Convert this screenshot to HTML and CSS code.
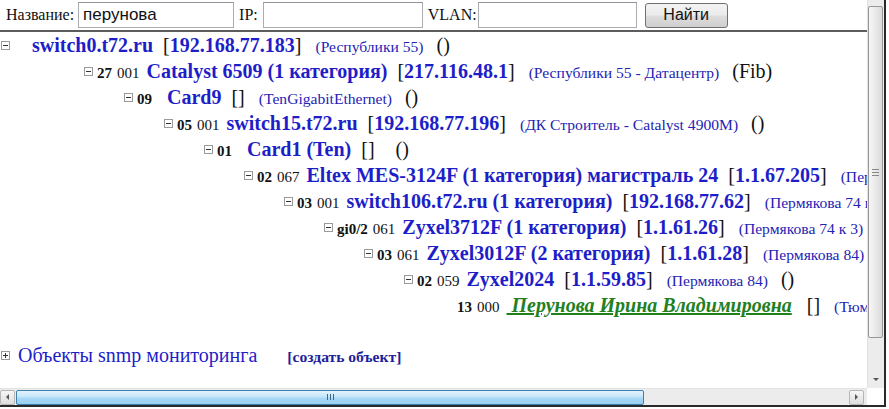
FILE: index.html
```html
<!DOCTYPE html>
<html lang="ru">
<head>
<meta charset="utf-8">
<title>Поиск</title>
<link rel="stylesheet" href="styles.css">
</head>
<body>
<div class="window">
  <div class="viewport">
    <form class="search">
      <label class="lbl">Название:</label><input class="field f-name" value="перунова">
      <label class="lbl lbl-gap">IP:</label><input class="field f-ip" value="">
      <label class="lbl lbl-gap lbl-vlan">VLAN:</label><input class="field f-vlan" value="">
      <button type="button" class="btn">Найти</button>
    </form>
    <div class="tree">
      <div class="row l0"><svg class="tg" width="9" height="9" viewBox="0 0 9 9"><rect x="0.5" y="0.5" width="8" height="8" fill="#fff" stroke="#9a9a9a"/><path d="M2 4.5h5" stroke="#333"/></svg><b class="nm first">switch0.t72.ru</b><span class="ipw">[<b class="ip">192.168.77.183</b>]</span><span class="loc">(Республики 55)</span><span class="par">()</span></div>
      <div class="row l1"><svg class="tg" width="9" height="9" viewBox="0 0 9 9"><rect x="0.5" y="0.5" width="8" height="8" fill="#fff" stroke="#9a9a9a"/><path d="M2 4.5h5" stroke="#333"/></svg><b class="num">27</b><span class="code">001</span><b class="nm">Catalyst 6509 (1 категория)</b><span class="ipw">[<b class="ip">217.116.48.1</b>]</span><span class="loc">(Республики 55 - Датацентр)</span><span class="par">(Fib)</span></div>
      <div class="row l2"><svg class="tg" width="9" height="9" viewBox="0 0 9 9"><rect x="0.5" y="0.5" width="8" height="8" fill="#fff" stroke="#9a9a9a"/><path d="M2 4.5h5" stroke="#333"/></svg><b class="num">09</b><b class="nm wide">Card9</b><span class="ipw">[]</span><span class="loc">(TenGigabitEthernet)</span><span class="par">()</span></div>
      <div class="row l3"><svg class="tg" width="9" height="9" viewBox="0 0 9 9"><rect x="0.5" y="0.5" width="8" height="8" fill="#fff" stroke="#9a9a9a"/><path d="M2 4.5h5" stroke="#333"/></svg><b class="num">05</b><span class="code">001</span><b class="nm">switch15.t72.ru</b><span class="ipw">[<b class="ip">192.168.77.196</b>]</span><span class="loc">(ДК Строитель - Catalyst 4900M)</span><span class="par">()</span></div>
      <div class="row l4"><svg class="tg" width="9" height="9" viewBox="0 0 9 9"><rect x="0.5" y="0.5" width="8" height="8" fill="#fff" stroke="#9a9a9a"/><path d="M2 4.5h5" stroke="#333"/></svg><b class="num">01</b><b class="nm wide">Card1 (Ten)</b><span class="ipw">[]</span><span class="par far">()</span></div>
      <div class="row l5"><svg class="tg" width="9" height="9" viewBox="0 0 9 9"><rect x="0.5" y="0.5" width="8" height="8" fill="#fff" stroke="#9a9a9a"/><path d="M2 4.5h5" stroke="#333"/></svg><b class="num">02</b><span class="code">067</span><b class="nm">Eltex MES-3124F (1 категория) магистраль 24</b><span class="ipw">[<b class="ip">1.1.67.205</b>]</span><span class="loc">(Пермякова 74)</span></div>
      <div class="row l6"><svg class="tg" width="9" height="9" viewBox="0 0 9 9"><rect x="0.5" y="0.5" width="8" height="8" fill="#fff" stroke="#9a9a9a"/><path d="M2 4.5h5" stroke="#333"/></svg><b class="num">03</b><span class="code">001</span><b class="nm">switch106.t72.ru (1 категория)</b><span class="ipw">[<b class="ip">192.168.77.62</b>]</span><span class="loc">(Пермякова 74 к 3)</span></div>
      <div class="row l7"><svg class="tg" width="9" height="9" viewBox="0 0 9 9"><rect x="0.5" y="0.5" width="8" height="8" fill="#fff" stroke="#9a9a9a"/><path d="M2 4.5h5" stroke="#333"/></svg><b class="num">gi0/2</b><span class="code">061</span><b class="nm">Zyxel3712F (1 категория)</b><span class="ipw">[<b class="ip">1.1.61.26</b>]</span><span class="loc">(Пермякова 74 к 3)</span></div>
      <div class="row l8"><svg class="tg" width="9" height="9" viewBox="0 0 9 9"><rect x="0.5" y="0.5" width="8" height="8" fill="#fff" stroke="#9a9a9a"/><path d="M2 4.5h5" stroke="#333"/></svg><b class="num">03</b><span class="code">061</span><b class="nm">Zyxel3012F (2 категория)</b><span class="ipw">[<b class="ip">1.1.61.28</b>]</span><span class="loc">(Пермякова 84)</span></div>
      <div class="row l9"><svg class="tg" width="9" height="9" viewBox="0 0 9 9"><rect x="0.5" y="0.5" width="8" height="8" fill="#fff" stroke="#9a9a9a"/><path d="M2 4.5h5" stroke="#333"/></svg><b class="num">02</b><span class="code">059</span><b class="nm">Zyxel2024</b><span class="ipw">[<b class="ip">1.1.59.85</b>]</span><span class="loc">(Пермякова 84)</span><span class="par">()</span></div>
      <div class="row l10"><span class="tg-blank"></span><b class="num">13</b><span class="code">000</span><a class="person">&nbsp;Перунова Ирина Владимировна</a><span class="ipw ipw-p">[]</span><span class="loc">(Тюмень)</span></div>
    </div>
    <div class="snmp"><svg class="tg" width="9" height="9" viewBox="0 0 9 9"><rect x="0.5" y="0.5" width="8" height="8" fill="#fff" stroke="#9a9a9a"/><path d="M2 4.5h5M4.5 2v5" stroke="#333"/></svg><span class="snmp-title">Объекты snmp мониторинга</span><b class="create">[создать объект]</b></div>
  </div>
  <div class="vscroll">
    <div class="vthumb"><span class="vgrip"></span></div>
    <div class="vbtn"><span class="arr-down"></span></div>
  </div>
  <div class="hscroll">
    <div class="hbtn"><span class="arr-left"></span></div>
    <div class="hthumb"><span class="hgrip"></span></div>
    <div class="hbtn hbtn-r"><span class="arr-right"></span></div>
  </div>
  <div class="corner"></div>
</div>
</body>
</html>
```

FILE: styles.css
```css
html, body {
  margin: 0;
  padding: 0;
  background: #fff;
}
body {
  width: 889px;
  height: 409px;
  overflow: hidden;
  font-family: "Liberation Serif", "Times New Roman", serif;
  color: #111;
}
.window {
  display: grid;
  grid-template-columns: 867px 17px;
  grid-template-rows: 388px 17px;
  width: 884px;
  border-right: 2px solid #2a2a2a;
  border-bottom: 2px solid #2a2a2a;
}
.viewport {
  overflow: hidden;
  background: #fff;
}
.search {
  display: flex;
  align-items: center;
  height: 32px;
  padding-left: 6px;
  border-bottom: 2px solid #5c5c5c;
  margin: 0;
  box-sizing: border-box;
}
.lbl {
  font-size: 16px;
  color: #111;
  margin-right: 4px;
}
.lbl-gap {
  margin-left: 5px;
}
.lbl-vlan {
  margin-right: 1px;
}
.field {
  box-sizing: border-box;
  height: 26px;
  border: 1px solid #abadb3;
  border-top-color: #8e9299;
  padding: 0 4px;
  font-family: "Liberation Sans", Arial, sans-serif;
  font-size: 17px;
  color: #111;
  margin: 0;
  outline: none;
}
.f-name { width: 156px; }
.f-ip { width: 160px; margin-left: 1px; }
.f-vlan { width: 159px; }
.btn {
  margin-left: 8px;
  width: 83px;
  height: 25px;
  border: 1px solid #707070;
  border-radius: 3px;
  background: linear-gradient(#f3f3f3 0%, #ebebeb 48%, #dddddd 52%, #cfcfcf 100%);
  font-family: "Liberation Sans", Arial, sans-serif;
  font-size: 16px;
  color: #111;
  padding: 0;
}
.row {
  height: 26px;
  line-height: 26px;
  white-space: nowrap;
  font-family: "Liberation Serif", "Times New Roman", serif;
}
.l0 { padding-left: 1px; }
.l1 { padding-left: 84px; }
.l2 { padding-left: 124px; }
.l3 { padding-left: 164px; }
.l4 { padding-left: 204px; }
.l5 { padding-left: 244px; }
.l6 { padding-left: 284px; }
.l7 { padding-left: 324px; }
.l8 { padding-left: 364px; }
.l9 { padding-left: 404px; }
.l10 { padding-left: 444px; }
.tg {
  vertical-align: 2px;
}
.tg-blank {
  display: inline-block;
  width: 9px;
}
.num {
  font-size: 15px;
  margin-left: 4px;
  color: #111;
}
.code {
  font-size: 15px;
  margin-left: 5px;
  color: #111;
}
.nm {
  font-size: 20px;
  color: #1e1ec8;
  margin-left: 7px;
}
.nm.first {
  margin-left: 22px;
}
.nm.wide {
  margin-left: 15px;
}
.ipw {
  font-size: 20px;
  color: #111;
  margin-left: 10px;
}
.ipw-p {
  margin-left: 15px;
}
.ip {
  color: #1e1ec8;
}
.loc {
  font-size: 15.6px;
  color: #2424b4;
  margin-left: 14px;
}
.par {
  font-size: 20px;
  color: #111;
  margin-left: 13px;
}
.par.far {
  margin-left: 21px;
}
.person {
  font-size: 20px;
  font-weight: bold;
  font-style: italic;
  color: #23801f;
  text-decoration: underline;
  margin-left: 7px;
}
.snmp {
  height: 26px;
  line-height: 26px;
  margin-top: 24px;
  white-space: nowrap;
  padding-left: 1px;
}
.snmp-title {
  font-size: 20px;
  color: #1e1ec8;
  margin-left: 8px;
}
.create {
  font-size: 15.6px;
  color: #1e1e9a;
  margin-left: 30px;
}
/* vertical scrollbar */
.vscroll {
  background: #ececec;
  border-left: 1px solid #e2e2e2;
  display: flex;
  flex-direction: column;
  justify-content: space-between;
  padding-top: 6px;
  box-sizing: border-box;
}
.vthumb {
  box-sizing: border-box;
  width: 15px;
  height: 332px;
  border: 1px solid #979797;
  border-radius: 2px;
  background: linear-gradient(to right, #f7f7f7, #e9e9e9 50%, #dadada);
  display: flex;
  align-items: center;
  justify-content: center;
}
.vgrip {
  display: block;
  width: 7px;
  height: 5px;
  border-top: 1px solid #888;
  border-bottom: 1px solid #888;
  background: linear-gradient(transparent 2px, #888 2px, #888 3px, transparent 3px);
}
.vbtn {
  height: 17px;
  display: flex;
  align-items: center;
  justify-content: center;
}
.arr-down {
  width: 0;
  height: 0;
  border-left: 3px solid transparent;
  border-right: 3px solid transparent;
  border-top: 3px solid #555;
}
/* horizontal scrollbar */
.hscroll {
  background: #ececec;
  border-top: 1px solid #e2e2e2;
  display: flex;
  align-items: center;
  box-sizing: border-box;
}
.hbtn {
  box-sizing: border-box;
  width: 15px;
  height: 15px;
  border: 1px solid #b5b5b5;
  border-radius: 2px;
  background: linear-gradient(#f6f6f6, #dedede);
  display: flex;
  align-items: center;
  justify-content: center;
}
.hbtn-r {
  margin-left: 205px;
}
.arr-left {
  width: 0;
  height: 0;
  border-top: 3px solid transparent;
  border-bottom: 3px solid transparent;
  border-right: 3px solid #555;
}
.arr-right {
  width: 0;
  height: 0;
  border-top: 3px solid transparent;
  border-bottom: 3px solid transparent;
  border-left: 3px solid #555;
}
.hthumb {
  box-sizing: border-box;
  margin-left: 1px;
  width: 628px;
  height: 15px;
  border: 1px solid #3d7fae;
  border-radius: 2px;
  background: linear-gradient(#e3f4fd, #c4e6fa 45%, #a8d8f5 55%, #98cff2);
  display: flex;
  align-items: center;
  justify-content: center;
}
.hgrip {
  display: block;
  width: 5px;
  height: 6px;
  border-left: 1px solid #3a6a8a;
  border-right: 1px solid #3a6a8a;
  background: linear-gradient(to right, transparent 2px, #3a6a8a 2px, #3a6a8a 3px, transparent 3px);
}
.corner {
  background: #fff;
}
```
